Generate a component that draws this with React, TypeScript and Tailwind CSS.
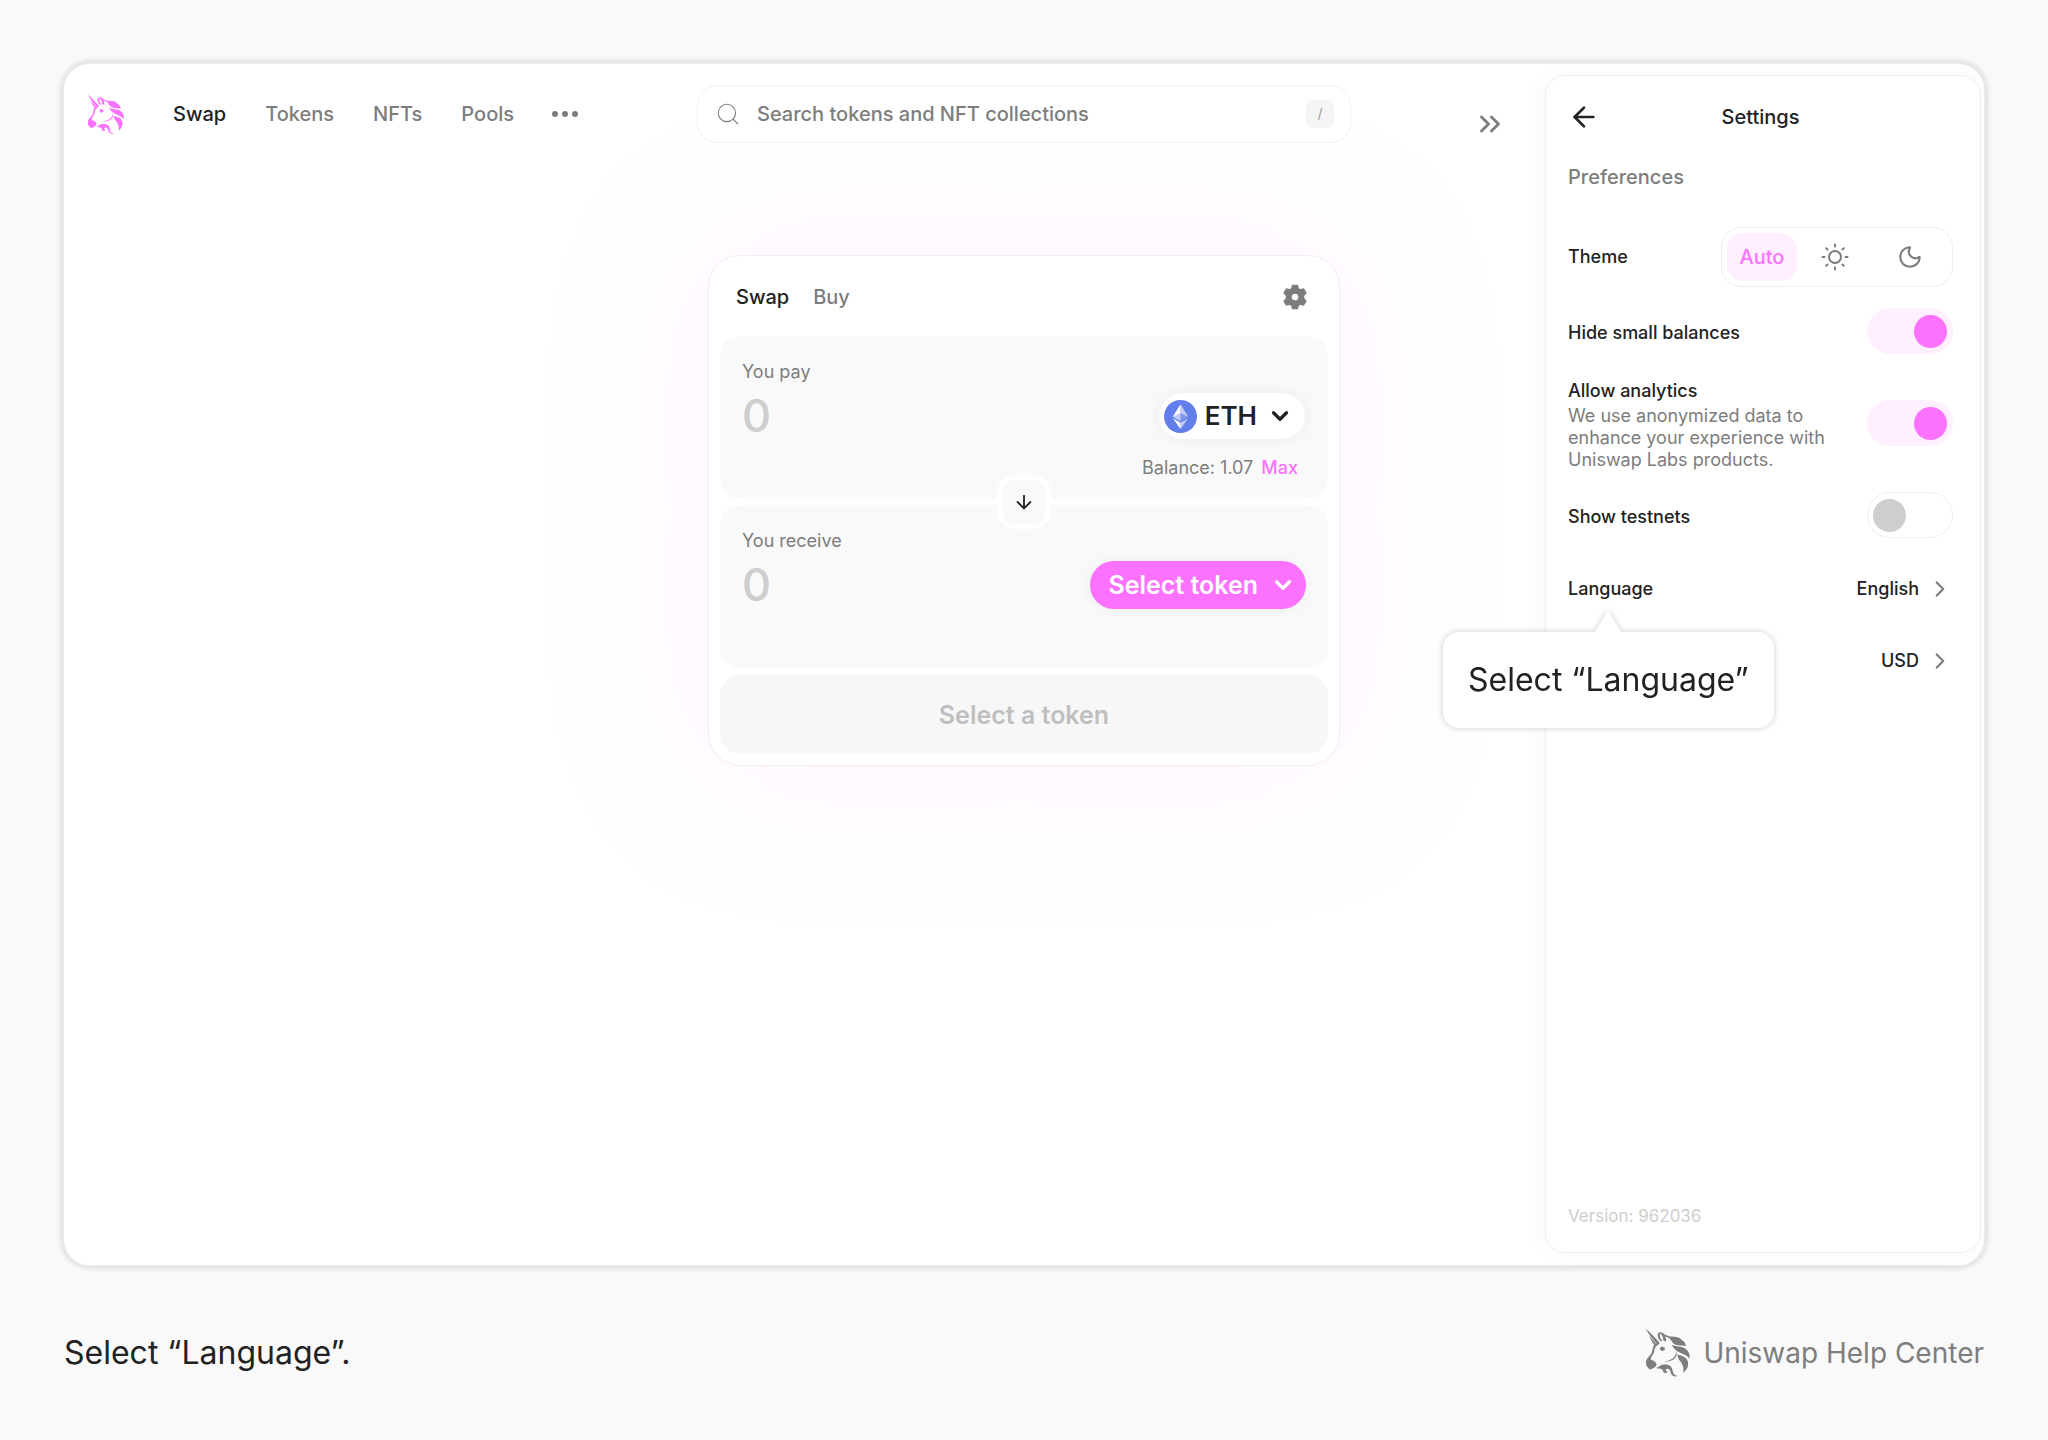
import React, { useState } from 'react';
import { ArrowDown, ArrowLeft, ChevronDown, ChevronRight, ChevronsRight, Moon, Search } from 'lucide-react';

type Theme = 'auto' | 'light' | 'dark';

interface ToggleProps {
  id: string;
  label: string;
  description?: string;
  checked: boolean;
  onChange: (checked: boolean) => void;
}

const NAV_LINKS = ['Swap', 'Tokens', 'NFTs', 'Pools'];

const UnicornLogo: React.FC<{ className: string }> = ({ className }) => (
  <svg viewBox="10 10 138 146" fill="currentColor" className={className} aria-hidden="true">
    {/* Horn */}
    <path d="M12 12 C26 24 40 38 53 53 L46 58 C34 44 22 30 12 12Z" />
    <path d="M21 32 C28 40 36 48 43 57 L38 62 C32 52 26 42 21 32Z" />
    {/* Forehead and muzzle */}
    <path d="M53 53 C44 56 40 58 37 62 C32 68 33 76 30 84 C26 94 14 100 13 112 C12 122 18 128 24 134 C32 131 38 131 44 122 C46 116 42 112 38 109 C34 106 28 107 27 102 C30 92 37 88 38 78 C39 70 42 64 53 57Z" />
    {/* Ear */}
    <path d="M49 26 C54 20 64 22 70 30 C80 32 86 36 92 42 C84 40 76 36 70 35 C72 40 76 46 72 50 L64 46 C66 40 62 30 56 27 C52 32 56 42 62 48 L58 50 C50 44 46 34 49 26Z" />
    {/* Eye */}
    <path d="M55 68 C60 64 66 66 70 70 C70 76 65 79 60 78 C56 76 54 72 55 68Z" />
    {/* Mane */}
    <path d="M78 36 C96 34 112 36 119 44 C128 50 132 56 132 64 C120 60 100 64 92 52 C88 46 84 40 78 36Z" />
    <path d="M90 60 C102 66 122 64 132 72 C142 80 146 90 143 102 C134 84 102 88 90 60Z" />
    <path d="M107 90 C122 92 136 98 139 112 C141 126 134 136 125 144 C127 130 124 120 118 112 C112 106 109 100 107 90Z" />
    {/* Jaw */}
    <path d="M104 78 C110 96 96 112 66 111 C88 108 104 98 104 78Z" />
    {/* Neck curl */}
    <path d="M42 130 C52 128 54 120 66 119 C84 118 92 126 93 138 C94 148 100 154 109 152 C104 157 92 156 88 146 C86 138 84 130 76 132 C70 134 72 142 78 140 C76 147 64 146 64 138 C62 130 54 132 42 130Z" />
  </svg>
);

const EthIcon: React.FC = () => (
  <svg viewBox="0 0 32 32" className="size-[33px]" aria-hidden="true">
    <circle cx="16" cy="16" r="16" fill="#627eea" />
    <path d="M16 4v8.9l7.5 3.3z" fill="#fff" fillOpacity=".6" />
    <path d="M16 4 8.5 16.2 16 12.9z" fill="#fff" />
    <path d="M16 22v6l7.5-10.4z" fill="#fff" fillOpacity=".6" />
    <path d="M16 28v-6l-7.5-4.4z" fill="#fff" />
    <path d="m16 20.6 7.5-4.4-7.5-3.3z" fill="#fff" fillOpacity=".2" />
    <path d="m8.5 16.2 7.5 4.4v-7.7z" fill="#fff" fillOpacity=".6" />
  </svg>
);

const GearIcon: React.FC = () => (
  <svg viewBox="0 0 26 26" className="size-[26px]" aria-hidden="true">
    <path
      fillRule="evenodd"
      fill="currentColor"
      stroke="currentColor"
      strokeWidth="1.5"
      strokeLinejoin="round"
      d="M10.6 1.5h4.8l.8 3.2 2 1.2 3.2-1 2.4 4.1-2.3 2.4v3.2l2.3 2.4-2.4 4.1-3.2-1-2 1.2-.8 3.2h-4.8l-.8-3.2-2-1.2-3.2 1-2.4-4.1 2.3-2.4v-3.2L2.2 9l2.4-4.1 3.2 1 2-1.2zM13 8.9a4.1 4.1 0 1 0 0 8.2 4.1 4.1 0 0 0 0-8.2z"
    />
  </svg>
);

const SunIcon: React.FC = () => (
  <svg viewBox="0 0 28 28" fill="none" stroke="currentColor" strokeWidth="2" strokeLinecap="round" className="size-7" aria-hidden="true">
    <circle cx="14" cy="14" r="6" />
    <path d="M14 1.5v2M14 24.5v2M1.5 14h2M24.5 14h2M5.3 5.3l1.2 1.2M21.5 21.5l1.2 1.2M5.3 22.7l1.2-1.2M21.5 6.5l1.2-1.2" />
  </svg>
);

const ToggleRow: React.FC<ToggleProps> = ({ id, label, description, checked, onChange }) => (
  <div className="flex items-center justify-between">
    <div className="pt-1">
      <label htmlFor={id} className="block text-lg/6 font-medium">{label}</label>
      {description && (
        <p id={`${id}-description`} className="mt-0.5 max-w-[270px] text-lg/[22px] text-[#7d7d7d]">{description}</p>
      )}
    </div>
    <input
      id={id}
      type="checkbox"
      role="switch"
      checked={checked}
      aria-describedby={description ? `${id}-description` : undefined}
      onChange={(e) => onChange(e.target.checked)}
      className="flex h-[46px] w-[86px] shrink-0 cursor-pointer appearance-none items-center rounded-full border border-[#eeeeee] bg-white px-[5px] before:size-[33px] before:rounded-full before:bg-[#cecece] checked:justify-end checked:border-[#ffefff] checked:bg-[#ffefff] checked:before:bg-[#fc72ff]"
    />
  </div>
);

const RowValue: React.FC<{ value: string }> = ({ value }) => (
  <span className="ml-auto flex items-center gap-2">
    {value}
    <ChevronRight size={26} strokeWidth={2} className="text-[#7d7d7d]" />
  </span>
);

const SwapCard: React.FC = () => {
  const [pay, setPay] = useState('');
  const [receive, setReceive] = useState('');

  return (
    <section className="rounded-[32px] border border-[#f5eaf5] bg-white p-[11px] shadow-[0_0_160px_40px_#fc72ff10]">
      <div className="flex items-center justify-between pt-[10px] pr-5 pb-[19px] pl-4">
        <div className="flex gap-6 text-xl/10 font-medium">
          <button type="button">Swap</button>
          <button type="button" className="text-[#7d7d7d]">Buy</button>
        </div>
        <button type="button" aria-label="Swap settings" className="text-[#7d7d7d]">
          <GearIcon />
        </button>
      </div>

      {/* You pay */}
      <div className="flex h-[163px] justify-between rounded-[20px] bg-[#f9f9f9] px-[22px] pt-6">
        <div className="flex min-w-0 flex-1 flex-col">
          <label htmlFor="pay" className="text-lg/6 text-[#7d7d7d]">You pay</label>
          <input
            id="pay"
            value={pay}
            onChange={(e) => setPay(e.target.value)}
            placeholder="0"
            inputMode="decimal"
            className="mt-2 h-12 w-full bg-transparent text-[45px]/[48px] font-medium outline-none placeholder:text-[#cecece]"
          />
        </div>
        <div className="flex flex-col items-end pt-8">
          <button type="button" className="flex h-12 items-center rounded-full border border-[#f2f2f2] bg-white pr-3 pl-[5px] text-[26px]/[32px] font-semibold shadow-[0_0_16px_#0000000d]">
            <EthIcon />
            <span className="mr-[10px] ml-2">ETH</span>
            <ChevronDown size={26} strokeWidth={3} />
          </button>
          <div className="mt-4 flex gap-2 pr-2 text-lg/6">
            <span className="text-[#7d7d7d]">Balance: 1.07</span>
            <button type="button" className="font-medium text-[#fc72ff]">Max</button>
          </div>
        </div>
      </div>

      <div className="relative z-10 -my-6 flex justify-center">
        <button
          type="button"
          aria-label="Switch tokens"
          className="flex size-[54px] items-center justify-center rounded-[18px] border-[5px] border-white bg-[#f9f9f9]"
        >
          <ArrowDown size={22} strokeWidth={2} />
        </button>
      </div>

      {/* You receive */}
      <div className="flex h-[163px] justify-between rounded-[20px] bg-[#f9f9f9] px-[22px] pt-6">
        <div className="flex min-w-0 flex-1 flex-col">
          <label htmlFor="receive" className="text-lg/6 text-[#7d7d7d]">You receive</label>
          <input
            id="receive"
            value={receive}
            onChange={(e) => setReceive(e.target.value)}
            placeholder="0"
            inputMode="decimal"
            className="mt-2 h-12 w-full bg-transparent text-[45px]/[48px] font-medium outline-none placeholder:text-[#cecece]"
          />
        </div>
        <div className="pt-8">
          <button type="button" className="flex h-12 items-center rounded-full bg-[#fc72ff] pr-[10px] pl-[18px] text-[25px]/[32px] font-semibold text-white shadow-[0_0_16px_#0000000d]">
            Select token
            <ChevronDown size={26} strokeWidth={3} className="ml-3" />
          </button>
        </div>
      </div>

      <button type="button" disabled className="mt-[7px] h-[79px] w-full rounded-[20px] bg-[#f7f7f7] text-[25px]/[32px] font-semibold text-[#bfbfbf]">
        Select a token
      </button>
    </section>
  );
};

const SettingsPanel: React.FC = () => {
  const [theme, setTheme] = useState<Theme>('auto');
  const [hideSmall, setHideSmall] = useState(true);
  const [analytics, setAnalytics] = useState(true);
  const [testnets, setTestnets] = useState(false);

  const themes: { value: Theme; label: string; content: React.ReactNode; width: string }[] = [
    { value: 'auto', label: 'Auto', content: 'Auto', width: 'w-[70px]' },
    { value: 'light', label: 'Light', content: <SunIcon />, width: 'w-[75px]' },
    { value: 'dark', label: 'Dark', content: <Moon size={26} strokeWidth={2} />, width: 'w-[75px]' },
  ];

  return (
    <aside className="flex w-[436px] flex-col rounded-[20px] border border-[#efefef] bg-white pr-[27px] pb-6 pl-[22px] shadow-[-4px_0_24px_#00000008]">
      <header className="relative mt-[23px] flex h-9 items-center justify-center">
        <button type="button" aria-label="Back" className="absolute left-0">
          <ArrowLeft size={32} strokeWidth={2} />
        </button>
        <h2 className="text-xl/7 font-medium">Settings</h2>
      </header>
      <h3 className="mt-7 text-xl/7 font-medium text-[#7d7d7d]">Preferences</h3>

      <div role="radiogroup" aria-labelledby="theme-label" className="mt-9 flex w-full items-center justify-between">
        <span id="theme-label" className="text-lg/6 font-medium">Theme</span>
        <div className="flex rounded-[20px] border border-[#eeeeee] p-[5px]">
          {themes.map((item) => (
            <label
              key={item.value}
              className={`relative flex h-12 cursor-pointer items-center justify-center rounded-2xl text-xl/7 font-medium ${item.width} ${
                theme === item.value ? 'bg-[#ffefff] text-[#fc72ff]' : 'text-[#7d7d7d]'
              }`}
            >
              <input
                type="radio"
                name="theme"
                value={item.value}
                aria-label={item.label}
                checked={theme === item.value}
                onChange={() => setTheme(item.value)}
                className="absolute inset-0 cursor-pointer appearance-none"
              />
              {item.content}
            </label>
          ))}
        </div>
      </div>

      <div className="mt-[21px] flex flex-col gap-[21px]">
        <ToggleRow id="hide-small" label="Hide small balances" checked={hideSmall} onChange={setHideSmall} />
        <ToggleRow
          id="analytics"
          label="Allow analytics"
          description="We use anonymized data to enhance your experience with Uniswap Labs products."
          checked={analytics}
          onChange={setAnalytics}
        />
        <ToggleRow id="testnets" label="Show testnets" checked={testnets} onChange={setTestnets} />
      </div>

      <div className="mt-[38px] flex flex-col gap-[46px]">
        <div className="relative">
          <button type="button" className="flex w-full items-center text-lg/6 font-medium">
            Language
            <RowValue value="English" />
          </button>
          <div
            role="tooltip"
            className="absolute top-14 -left-[125px] z-20 rounded-2xl bg-white px-[25px] py-7 text-[32px]/[40px] whitespace-nowrap drop-shadow-[0_0_3px_#00000033]"
          >
            <svg viewBox="0 0 30 22" fill="#fff" className="absolute -top-[21px] left-1/2 h-[22px] w-[30px] -translate-x-1/2" aria-hidden="true">
              <path d="M0 22C3 20 4 18 12.5 3Q15-1 17.5 3C26 18 27 20 30 22z" />
            </svg>
            Select “Language”
          </div>
        </div>
        <button type="button" aria-label="Currency" className="flex w-full items-center text-lg/6 font-medium">
          <RowValue value="USD" />
        </button>
      </div>

      <p className="mt-auto text-[17px]/6 text-[#cecece]">Version: 962036</p>
    </aside>
  );
};

const App: React.FC = () => (
  <div className="flex min-h-screen flex-col bg-[#f9f9f9] px-[62px] pt-[62px] font-['Inter','Liberation_Sans',sans-serif] text-[#222222]">
    <main className="grid flex-1 grid-cols-[minmax(0,1fr)_minmax(0,654px)_minmax(0,1fr)] rounded-[28px] border-2 border-[#eaeaea] bg-white shadow-[0_0_6px_#00000030]">
      {/* Logo and navigation */}
      <nav className="flex h-[99px] items-center pl-[23px] text-xl/7 font-medium text-[#7d7d7d]">
        <a href="#" aria-label="Uniswap home" className="mr-12 text-[#fc72ff]">
          <UnicornLogo className="h-[42px] w-[38px]" />
        </a>
        <div className="flex gap-[39px]">
          {NAV_LINKS.map((link) => (
            <a key={link} href="#" className={link === 'Swap' ? 'text-[#222222]' : ''}>
              {link}
            </a>
          ))}
        </div>
        <button type="button" aria-label="More" className="ml-[38px] flex gap-1">
          <span className="size-[6px] rounded-full bg-current" />
          <span className="size-[6px] rounded-full bg-current" />
          <span className="size-[6px] rounded-full bg-current" />
        </button>
      </nav>

      <div className="flex flex-col pt-[21px]">
        <div className="relative z-10 flex h-[58px] items-center rounded-[20px] border border-[#f2f2f2] bg-white pr-4 pl-[17px]">
          <Search size={26} strokeWidth={1} className="text-[#7d7d7d]" />
          <input
            type="search"
            aria-label="Search tokens and NFT collections"
            placeholder="Search tokens and NFT collections"
            className="mx-4 min-w-0 flex-1 text-xl/7 font-medium outline-none placeholder:text-[#7d7d7d]"
          />
          <kbd className="flex size-7 items-center justify-center rounded-md bg-[#f5f5f5] font-['Inter'] text-sm text-[#9b9b9b]">/</kbd>
        </div>
        <div className="mx-[11px] mt-28">
          <SwapCard />
        </div>
      </div>

      <div className="relative flex items-stretch justify-end gap-[38px] pt-[11px] pr-[3px] pb-3">
        <button type="button" aria-label="Close settings" className="mt-8 self-start text-[#7d7d7d]">
          <ChevronsRight size={34} strokeWidth={2} />
        </button>
        <SettingsPanel />
      </div>
    </main>

    <footer className="flex h-[173px] items-center justify-between px-0.5 pb-0.5">
      <p className="text-[32px]/[40px]">Select “Language”.</p>
      <div className="flex items-center gap-3 text-[28px]/[40px] text-[#7d7d7d]">
        <UnicornLogo className="h-[49px] w-[46px]" />
        Uniswap Help Center
      </div>
    </footer>
  </div>
);

export default App;
